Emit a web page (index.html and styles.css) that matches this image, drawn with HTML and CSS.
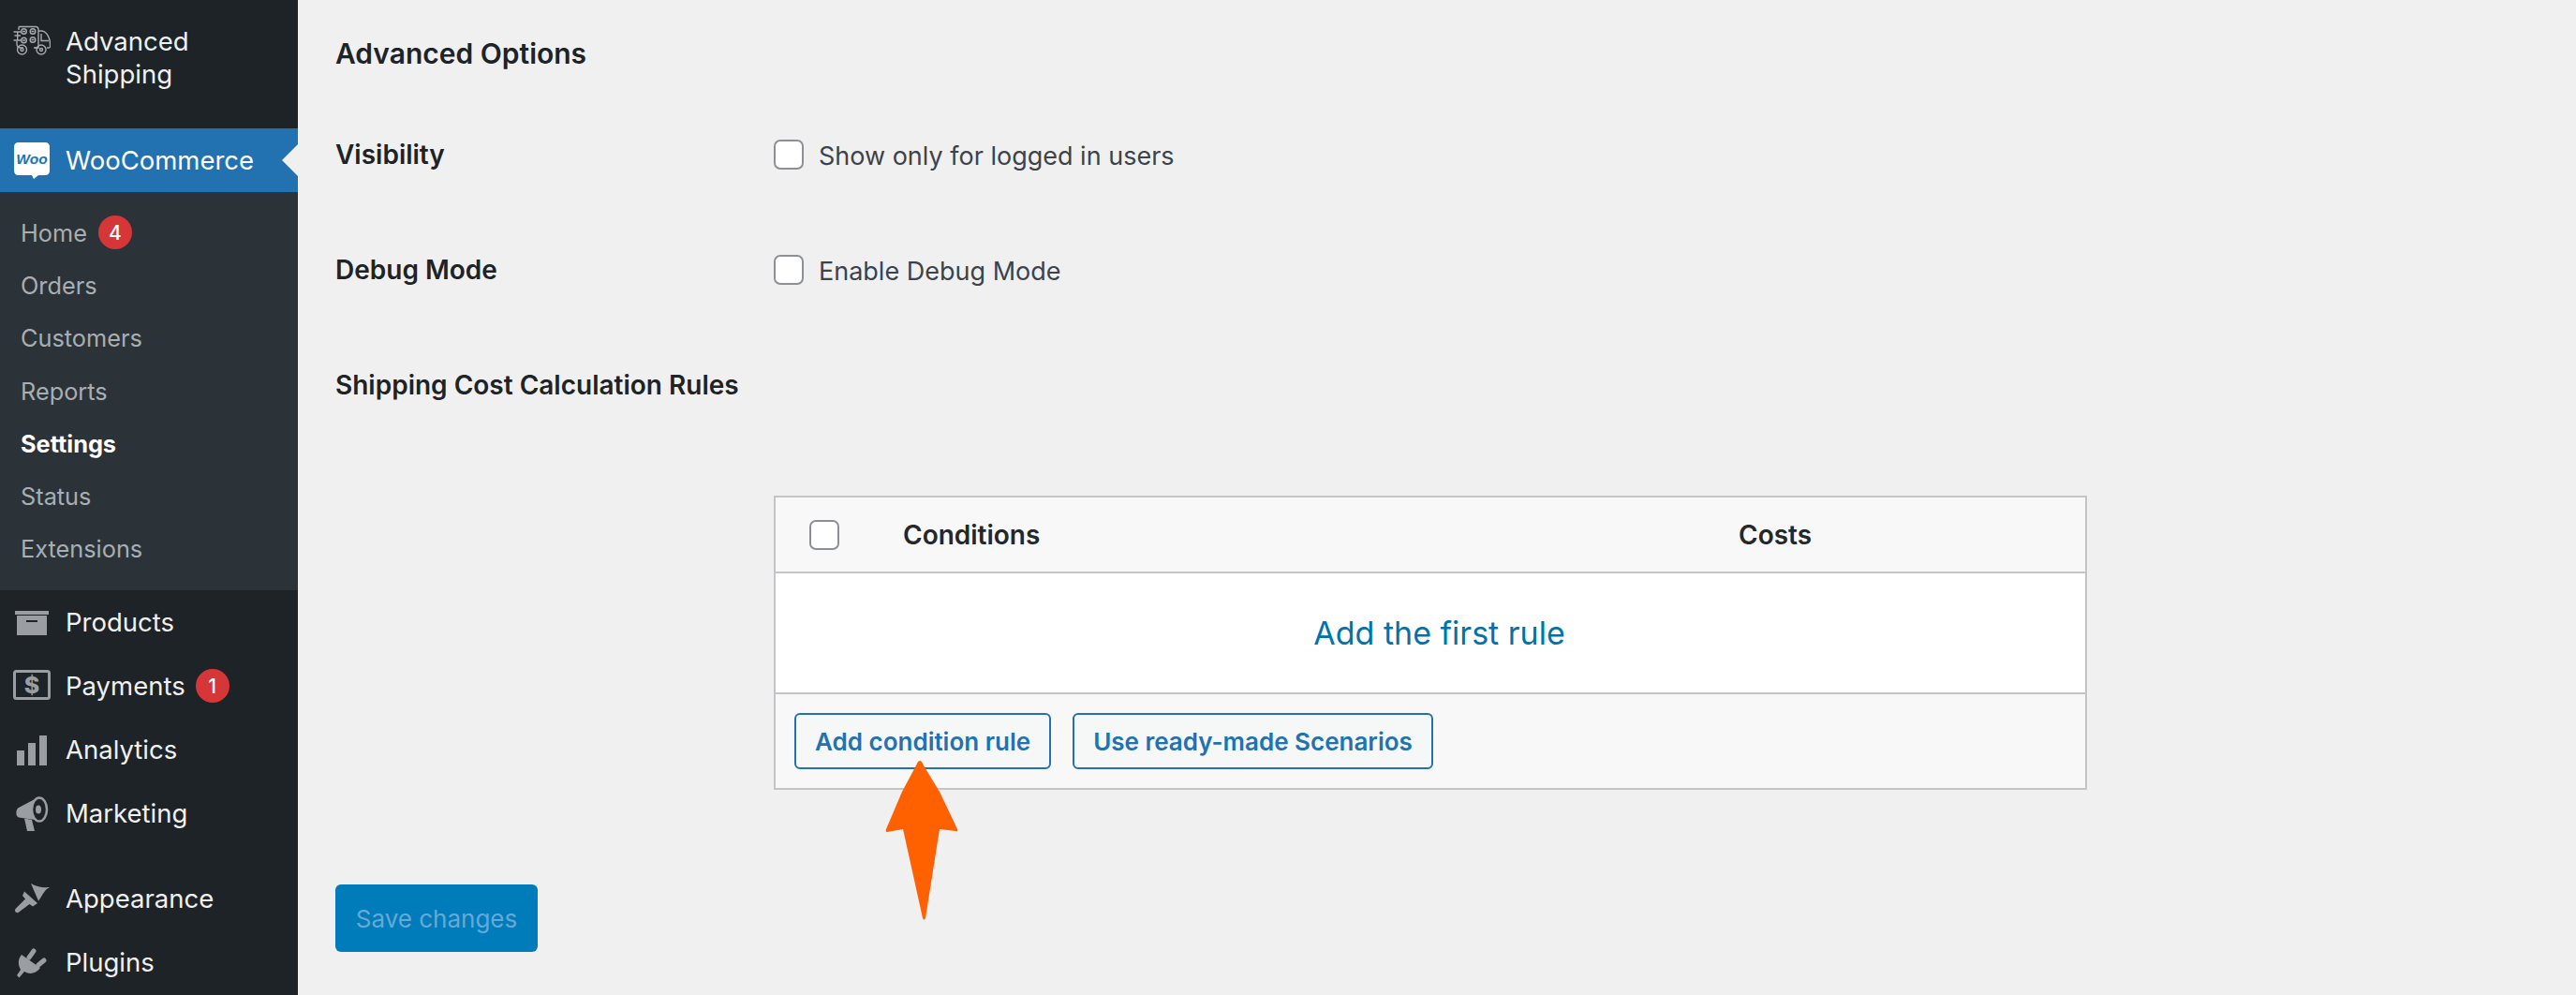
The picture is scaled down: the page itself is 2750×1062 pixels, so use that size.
FILE: index.html
```html
<!DOCTYPE html>
<html lang="en">
<head>
<meta charset="utf-8">
<title>Advanced Shipping Settings</title>
<link rel="stylesheet" href="styles.css">
</head>
<body>
<div class="layout">
  <nav class="sidebar">
    <a class="item item-tall">
      <svg class="icon icon-truck" viewBox="0 0 40 40" fill="none" stroke="#a7aaad" stroke-width="1.400">
        <path d="M6 4.500H24Q27 4.500 27 7.500V27H23M11 27H8.500Q4 27 4 23V20"/>
        <path d="M6 8V4.500M27 9H31Q36 10 38.500 17Q39.500 20 39.500 23V26Q39.500 27 38 27H36M22 27H27"/>
        <path d="M30 12V19.500H38"/>
        <circle cx="9.500" cy="29" r="5"/><circle cx="9.500" cy="29" r="1.500"/>
        <circle cx="30" cy="29" r="5"/><circle cx="30" cy="29" r="1.500"/>
        <path d="M0.500 10H9M4.700 10V14M1.500 14H8M0.500 19H9M4.700 14V19"/>
        <circle cx="11.500" cy="9.500" r="2.800"/><circle cx="21" cy="9.500" r="2.800"/><circle cx="21" cy="18.500" r="2.800"/><circle cx="11.500" cy="19" r="2.800"/>
        <path d="M10 9.500H13M19.500 9.500H22.500M19.500 18.500H22.500M10 19H13"/>
      </svg>
      <span class="item-label">Advanced<br>Shipping</span>
    </a>
    <a class="item item-current">
      <svg class="icon" viewBox="0 0 40 40">
        <path class="woo-bubble" d="M6 1H34Q39 1 39 6V31Q39 36 34 36H27L22 40L20 36H6Q1 36 1 31V6Q1 1 6 1Z"/>
        <text class="woo-text" x="20" y="24" text-anchor="middle">Woo</text>
      </svg>
      <span class="item-label">WooCommerce</span>
    </a>
    <ul class="submenu">
      <li class="sub-item">Home <span class="badge">4</span></li>
      <li class="sub-item">Orders</li>
      <li class="sub-item">Customers</li>
      <li class="sub-item">Reports</li>
      <li class="sub-item sub-item-current">Settings</li>
      <li class="sub-item">Status</li>
      <li class="sub-item">Extensions</li>
    </ul>
    <a class="item">
      <svg class="icon" viewBox="0 0 40 40">
        <path class="icon-fill" fill-rule="evenodd" d="M2 8H38V12H2ZM4 13H36V34H4ZM14 18V20H26V18Z"/>
      </svg>
      <span class="item-label">Products</span>
    </a>
    <a class="item">
      <svg class="icon" viewBox="0 0 40 40">
        <rect class="icon-stroke" x="1.500" y="4.500" width="37" height="29" rx="2"/>
        <text class="dollar" x="20" y="28" text-anchor="middle">$</text>
      </svg>
      <span class="item-label">Payments</span>
      <span class="badge badge-menu">1</span>
    </a>
    <a class="item">
      <svg class="icon" viewBox="0 0 40 40">
        <path class="icon-fill" d="M4 21H12V37H4ZM16 13H24V37H16ZM28 5H36V37H28Z"/>
      </svg>
      <span class="item-label">Analytics</span>
    </a>
    <a class="item item-last">
      <svg class="icon" viewBox="0 0 40 40">
        <path class="icon-fill" d="M6 14L24 4.500C19 11 18.500 20 23 27L6 24.500C2.500 23.500 2.500 15.500 6 14Z"/>
        <path class="icon-fill" d="M12 25.500L20 27L23 39H15Z"/>
        <ellipse class="icon-ring" cx="28" cy="16" rx="8" ry="12.500"/>
        <ellipse class="icon-fill" cx="27" cy="16" rx="3" ry="4.500"/>
      </svg>
      <span class="item-label">Marketing</span>
    </a>
    <a class="item">
      <svg class="icon" viewBox="0 0 40 40">
        <path class="icon-fill" d="M19 4C26 8 32 8.500 39 8C33 11 32 16 27 22.500Z"/>
        <path class="icon-fill" d="M12 12.500L26 25L21 28.500L17.500 26L5.500 35C3 36 1 33 2.500 31L13 20.500L10 17Z"/>
      </svg>
      <span class="item-label">Appearance</span>
    </a>
    <a class="item">
      <svg class="icon" viewBox="0 0 40 40">
        <path class="icon-fill" d="M9 12L29 26C24 33 17 33 12 30L6.500 36.500L4 34L8 28C5 22 5 17 9 12Z"/>
        <path class="icon-prong" d="M22 8L17 15M33 18L27 23"/>
      </svg>
      <span class="item-label">Plugins</span>
    </a>
  </nav>

  <main class="content">
    <h2 class="title">Advanced Options</h2>
    <div class="row">
      <div class="row-label">Visibility</div>
      <label class="option"><input class="check" type="checkbox"><span class="option-text">Show only for logged in users</span></label>
    </div>
    <div class="row">
      <div class="row-label">Debug Mode</div>
      <label class="option"><input class="check" type="checkbox"><span class="option-text">Enable Debug Mode</span></label>
    </div>
    <div class="row row-rules">
      <div class="row-label">Shipping Cost Calculation Rules</div>
    </div>
    <section class="rules">
      <header class="rules-head">
        <div class="col-check"><input class="check" type="checkbox"></div>
        <div class="col-conditions">Conditions</div>
        <div class="col-costs">Costs</div>
      </header>
      <div class="rules-body"><a class="first-rule">Add the first rule</a></div>
      <footer class="rules-foot">
        <button class="btn" type="button">Add condition rule</button>
        <button class="btn" type="button">Use ready-made Scenarios</button>
      </footer>
      <svg class="pointer" viewBox="0 0 80 172">
        <path d="M37 0C39 0 40 3 41 5L58 33L77 73Q78 76 75 75L58 73L43 168Q41 171 40 168L19 73L2 76Q0 76 1 73L18 33L33 5C34 3 35 0 37 0Z"/>
      </svg>
    </section>
    <button class="save" type="button">Save changes</button>
  </main>
</div>
</body>
</html>
```
FILE: styles.css
```css
* { box-sizing: border-box; }
html, body { margin: 0; height: 100%; overflow: hidden; }
body { font-family: Inter, "Liberation Sans", sans-serif; background: #f0f0f1; color: #1d2327; }
ul { list-style: none; margin: 0; padding: 0; }

.layout { display: flex; height: 1062px; overflow: hidden; }

.sidebar { width: 318px; flex: none; background: #1d2327; height: 1062px; overflow: hidden; }
.item { position: relative; display: flex; align-items: center; height: 68px; padding-left: 14px; color: #f0f0f1; font-size: 27.500px; line-height: 35px; }
.item-tall { height: 137px; align-items: flex-start; padding-top: 27px; }
.item-last { margin-bottom: 23px; }
.item-current { background: #2271b1; color: #fff; }
.item-current::after { content: ""; position: absolute; right: 0; top: 17px; border: 17px solid transparent; border-left: 0; border-right-color: #f0f0f1; }
.icon { width: 40px; height: 40px; flex: none; margin-right: 16px; }
.icon-truck { margin-top: -3px; }
.icon-fill { fill: #9a9ea3; }
.icon-stroke { fill: none; stroke: #9a9ea3; stroke-width: 3; }
.icon-ring { fill: none; stroke: #9a9ea3; stroke-width: 2.500; }
.icon-prong { fill: none; stroke: #9a9ea3; stroke-width: 5; stroke-linecap: round; }
.woo-bubble { fill: #fff; }
.woo-text { font: italic 700 15.500px "Liberation Sans", sans-serif; fill: #2271b1; }
.dollar { font: 800 25px Inter, sans-serif; fill: #9a9ea3; }

.submenu { background: #2c3338; height: 425px; padding-top: 15px; }
.sub-item { display: flex; align-items: center; gap: 12px; height: 56.300px; padding-left: 22px; font-size: 25.300px; color: #a7aeb4; }
.sub-item-current { color: #fff; font-weight: 700; }
.badge { width: 36px; height: 36px; border-radius: 50%; background: #d63638; color: #fff; font-size: 21px; font-weight: 500; display: flex; align-items: center; justify-content: center; }
.badge-menu { margin-left: 11px; }

.content { flex: 1; padding: 37px 0 0 40px; min-width: 0; }
.title { margin: 0 0 72px; font-size: 30px; font-weight: 600; line-height: 40px; }
.row { display: flex; align-items: center; height: 32px; margin-bottom: 91px; }
.row-label { width: 468px; flex: none; font-size: 28px; font-weight: 600; line-height: 32px; }
.row-rules { height: 40px; margin: -4px 0 98px; }
.option { display: flex; align-items: center; font-size: 27px; color: #3c434a; }
.option-text { padding-top: 2px; }
.check { appearance: none; margin: 0 16px 0 0; width: 32px; height: 32px; border: 2px solid #8c8f94; border-radius: 7px; background: #fff; flex: none; }

.rules { position: relative; width: 1402px; margin-left: 468px; border: 2px solid #c3c4c7; }
.rules-head { display: flex; align-items: center; height: 81px; background: #f8f8f8; border-bottom: 2px solid #c3c4c7; font-size: 28px; font-weight: 600; color: #23282d; }
.col-check { width: 136px; padding-left: 36px; display: flex; }
.col-check .check { margin: 0; }
.col-conditions { width: 892px; }
.rules-body { display: flex; align-items: center; justify-content: center; height: 127px; padding-left: 19px; background: #fff; }
.first-rule { font-size: 34px; color: #0073aa; }
.rules-foot { display: flex; gap: 23px; height: 102px; padding: 20px; background: #f8f8f8; border-top: 2px solid #c3c4c7; }
.btn { height: 60px; padding: 0 20px; border: 2px solid #2271b1; border-radius: 6px; background: #f6f7f7; color: #2271b1; font: 600 26px Inter, sans-serif; }
.pointer { position: absolute; left: 117px; top: 281px; width: 80px; height: 172px; fill: #ff6000; }

.save { display: block; margin-top: 101px; width: 216px; height: 72px; border: 0; border-radius: 6px; background: #007cba; color: #66a9d6; font: 400 26px Inter, sans-serif; }
```
